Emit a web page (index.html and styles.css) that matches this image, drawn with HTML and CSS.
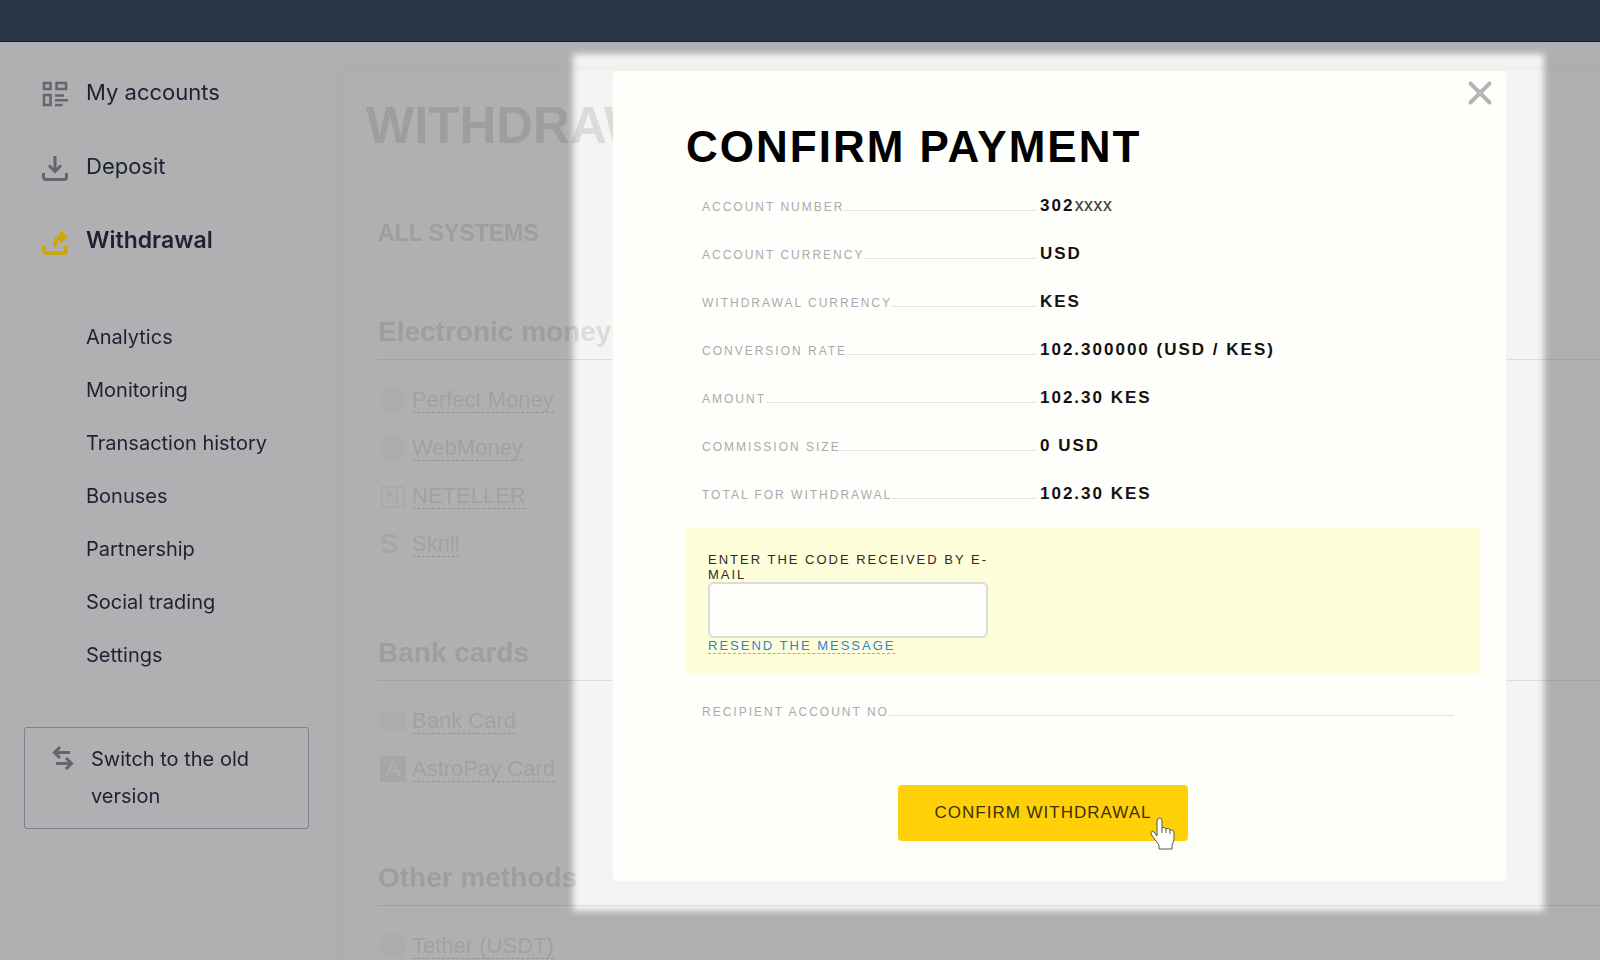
FILE: index.html
```
<!doctype html>
<html lang="en">
  <head>
    <meta charset="UTF-8">
    <meta name="viewport" content="width=device-width, initial-scale=1.0">
    <title>Withdrawal</title>
    <link rel="stylesheet" href="styles.css">
  </head>
  <body>
    <header class="topbar"></header>
    <div class="layout">
      <!-- Sidebar -->
      <aside class="sidebar">
        <nav>
          <ul class="main-nav">
            <li>
              <a href="#">
                <svg width="26" height="26" viewBox="0 0 26 26" fill="none" stroke="currentColor" stroke-width="2.500">
                  <path d="M2 2h6.500v6H2zM14.500 2H24v6h-9.500zM2 14h6.500v10H2z"/>
                  <path d="M13 14.500h9M13 19.200h13M13 24h7.500"/>
                </svg>
                My accounts
              </a>
            </li>
            <li>
              <a href="#">
                <svg width="26" height="26" viewBox="0 0 26 26" fill="none" stroke="currentColor" stroke-width="3">
                  <path d="M13 1v15M7 10.500l6 6 6-6"/>
                  <path d="M1.500 18v4q0 2.500 2.500 2.500h18q2.500 0 2.500-2.500v-4"/>
                </svg>
                Deposit
              </a>
            </li>
            <li>
              <a href="#" class="active">
                <svg width="26" height="26" viewBox="0 0 26 26" fill="none" stroke="currentColor" stroke-width="4">
                  <path d="M13 18v-3q0-7 8-7"/>
                  <path d="M18 1l8 7-8 7z" fill="currentColor" stroke="none"/>
                  <path d="M2 17v4q0 3 3 3h16q3 0 3-3v-4"/>
                </svg>
                Withdrawal
              </a>
            </li>
          </ul>
          <ul class="sub-nav">
            <li><a href="#">Analytics</a></li>
            <li><a href="#">Monitoring</a></li>
            <li><a href="#">Transaction history</a></li>
            <li><a href="#">Bonuses</a></li>
            <li><a href="#">Partnership</a></li>
            <li><a href="#">Social trading</a></li>
            <li><a href="#">Settings</a></li>
          </ul>
        </nav>
        <button type="button" class="switch-btn">
          <svg width="22" height="26" viewBox="0 0 22 26" fill="none" stroke="currentColor" stroke-width="3">
            <path d="M18 7.500H3M8 2L2.500 7.500 8 13M4 18.500h15M14 13l5.500 5.500L14 24"/>
          </svg>
          <span>Switch to the old version</span>
        </button>
      </aside>

      <!-- Payment systems -->
      <main class="card">
        <h1>WITHDRAWAL</h1>
        <h2>ALL SYSTEMS</h2>
        <section>
          <h3>Electronic money</h3>
          <ul>
            <li><span class="logo round"></span><a href="#">Perfect Money</a></li>
            <li><span class="logo round"></span><a href="#">WebMoney</a></li>
            <li>
              <svg class="logo-svg" width="26" height="26" viewBox="0 0 26 26" fill="none" stroke="currentColor" stroke-width="2">
                <path d="M2 4h22v20H2zM8 20V9l9 10V8"/>
              </svg>
              <a href="#">NETELLER</a>
            </li>
            <li><span class="logo letter">S</span><a href="#">Skrill</a></li>
          </ul>
        </section>
        <section>
          <h3>Bank cards</h3>
          <ul>
            <li><span class="logo bank"></span><a href="#">Bank Card</a></li>
            <li><span class="logo square">A</span><a href="#">AstroPay Card</a></li>
          </ul>
        </section>
        <section>
          <h3>Other methods</h3>
          <ul>
            <li><span class="logo round"></span><a href="#">Tether (USDT)</a></li>
          </ul>
        </section>
      </main>
    </div>

    <!-- Confirm dialog -->
    <div class="spotlight">
      <div class="spotlight-glow"></div>
      <div class="dialog" role="dialog" aria-labelledby="dialog-title">
        <button type="button" class="close-btn" aria-label="Close">
          <svg width="26" height="26" viewBox="0 0 26 26" fill="none" stroke="currentColor" stroke-width="4" stroke-linecap="round">
            <path d="M3.500 3.500l19 19M22.500 3.500l-19 19"/>
          </svg>
        </button>
        <h2 id="dialog-title">CONFIRM PAYMENT</h2>
        <dl class="details">
          <div><dt>ACCOUNT NUMBER</dt><dd>302<span class="masked">xxxx</span></dd></div>
          <div><dt>ACCOUNT CURRENCY</dt><dd>USD</dd></div>
          <div><dt>WITHDRAWAL CURRENCY</dt><dd>KES</dd></div>
          <div><dt>CONVERSION RATE</dt><dd>102.300000 (USD / KES)</dd></div>
          <div><dt>AMOUNT</dt><dd>102.30 KES</dd></div>
          <div><dt>COMMISSION SIZE</dt><dd>0 USD</dd></div>
          <div><dt>TOTAL FOR WITHDRAWAL</dt><dd>102.30 KES</dd></div>
        </dl>
        <form>
          <div class="code-box">
            <label for="code">ENTER THE CODE RECEIVED BY E-MAIL</label>
            <input type="text" id="code">
            <a href="#">RESEND THE MESSAGE</a>
          </div>
          <div class="recipient">RECIPIENT ACCOUNT NO</div>
          <div class="submit">
            <button type="button" class="confirm-btn">CONFIRM WITHDRAWAL</button>
            <svg class="cursor" width="26" height="34" viewBox="0 0 26 34" fill="#fff" stroke="#555" stroke-width="1">
              <path d="M7 19V4q0-3 2.500-3T12 4v7q2-2 4 1 2.500-2 4 1 4-1 4 3v7l-2 5v4H9v-4l-3-4-5-7q0-4 3-2z"/>
              <path d="M12 11v5M16 12v4M20 13v4" fill="none"/>
            </svg>
          </div>
        </form>
      </div>
    </div>
  </body>
</html>
```
FILE: styles.css
```
:root {
  --page: #b0b0b2;
  --ink: #1c2233;
  --icon: #64666e;
  --faded: #9e9e9d;
  --faded-light: #a1a1a2;
  --yellow: #ffd008;
}
* {
  box-sizing: border-box;
}
body {
  margin: 0;
  height: 100vh;
  overflow: hidden;
  background: var(--page);
  font-family: "Liberation Sans", Arial, sans-serif;
}
h1, h2, h3, ul, dl, dd {
  margin: 0;
  padding: 0;
}
ul {
  list-style: none;
}
a {
  color: inherit;
  text-decoration: none;
}
.topbar {
  height: 42px;
  background: #2a3646;
  border-bottom: 1px solid #15203a;
}
.layout {
  display: grid;
  grid-template-columns: 344px 1fr;
  height: calc(100vh - 42px);
  overflow: hidden;
}

/* Sidebar */
.sidebar {
  padding: 13px 35px 0 24px;
  color: var(--ink);
  font-family: Inter, sans-serif;
}
.main-nav a {
  display: flex;
  align-items: center;
  gap: 18px;
  height: 74px;
  padding-left: 18px;
  font-size: 22px;
}
.main-nav svg {
  margin-top: 4px;
  color: var(--icon);
}
.main-nav .active {
  font-size: 23px;
  font-weight: 600;
}
.main-nav .active svg {
  color: #c8a80c;
}
.sub-nav {
  margin: 34px 0 45px 62px;
  font-size: 20px;
  line-height: 53px;
}
.switch-btn {
  display: flex;
  align-items: flex-start;
  gap: 17px;
  width: 100%;
  padding: 13px 40px 13px 27px;
  border: 1px solid #808189;
  border-radius: 3px;
  background: none;
  color: inherit;
  font: inherit;
  font-size: 20px;
  line-height: 37px;
  text-align: left;
}
.switch-btn svg {
  flex: none;
  margin-top: 4px;
  color: var(--icon);
}

/* Payment systems */
.card {
  margin-top: 29px;
  padding: 25px 0 0 22px;
  box-shadow: 0 0 0 3px #adadab, 0 0 6px 3px #a8a8a5;
  color: var(--faded);
}
.card h1 {
  font-size: 51px;
  line-height: 60px;
}
.card h2 {
  margin: 62px 0 63px 12px;
  font-size: 23px;
  line-height: 30px;
}
.card section {
  margin: 0 0 64px 12px;
}
.card h3 {
  margin-bottom: 16px;
  padding-bottom: 6px;
  border-bottom: 1px solid #a0a0a3;
  font-size: 28px;
  line-height: 42px;
}
.card li {
  display: flex;
  align-items: center;
  gap: 6px;
  height: 48px;
  padding-left: 2px;
  color: var(--faded-light);
  font-size: 22px;
}
.card li a {
  border-bottom: 1px dashed #949496;
  line-height: 24px;
}
.logo {
  width: 26px;
  height: 26px;
  background: #acacaa;
  line-height: 26px;
  text-align: center;
}
.logo.round {
  border-radius: 50%;
}
.logo.letter {
  background: none;
  color: #a6a6a6;
  font-weight: bold;
  font-size: 28px;
  text-align: left;
}
.logo.bank {
  height: 20px;
}
.logo.square {
  background: #a6a6a6;
  color: var(--page);
}
.logo-svg {
  color: #a9a9a8;
}

/* Dialog over a brightened area of the page */
.spotlight {
  position: absolute;
  top: 54px;
  left: 573px;
  right: 56px;
  padding: 17px 38px 30px 40px;
}
.spotlight-glow {
  position: absolute;
  inset: 0;
  background: #474745;
  mix-blend-mode: color-dodge;
  filter: blur(3px);
}
.dialog {
  position: relative;
  padding: 51px 26px 40px 73px;
  border-radius: 4px;
  background: #fefffb;
}
.close-btn {
  position: absolute;
  top: 9px;
  right: 13px;
  display: flex;
  padding: 0;
  border: none;
  background: none;
  color: #b4b4b4;
}
.dialog h2 {
  margin-bottom: 11px;
  color: #000;
  font-size: 44px;
  line-height: 50px;
  letter-spacing: 2px;
}
.details {
  margin: 0 0 9px 16px;
  line-height: 46px;
}
.details div {
  display: grid;
  grid-template-columns: 334px 1fr;
  align-items: baseline;
  column-gap: 4px;
  height: 48px;
}
.details dt, .recipient {
  display: flex;
  align-items: baseline;
  color: #a9aaae;
  font-size: 12px;
  letter-spacing: 2px;
}
.details dt::after, .recipient::after {
  content: "";
  flex: 1;
  border-bottom: 1px solid #e2e3e8;
}
.details dd {
  color: #111;
  font-size: 17px;
  font-weight: bold;
  letter-spacing: 2px;
}
.masked {
  color: #444;
  font-family: Roboto, sans-serif;
  font-size: 19px;
  font-weight: normal;
  letter-spacing: 0;
  line-height: 1;
}
.code-box {
  display: flex;
  flex-direction: column;
  align-items: flex-start;
  padding: 24px 22px 20px;
  background: #fffedb;
  font-size: 13px;
  letter-spacing: 2px;
}
.code-box label {
  width: 280px;
  color: #32291c;
  line-height: 15px;
}
.code-box input {
  width: 280px;
  height: 56px;
  padding: 0 12px;
  border: 2px solid #dcdcd4;
  border-radius: 6px;
  background: #fefffb;
  font-size: 17px;
}
.code-box a {
  border-bottom: 1px dashed #7db4e6;
  color: #2f83d6;
  line-height: 15px;
}
.recipient {
  margin: 14px 26px 49px 16px;
  line-height: 48px;
}
.submit {
  position: relative;
  width: 290px;
  margin-left: 212px;
}
.confirm-btn {
  width: 100%;
  height: 56px;
  border: none;
  border-radius: 4px;
  background: var(--yellow);
  color: #3c3006;
  font-family: inherit;
  font-size: 17px;
  letter-spacing: 1px;
}
.cursor {
  position: absolute;
  right: 12px;
  bottom: -10px;
}
```
